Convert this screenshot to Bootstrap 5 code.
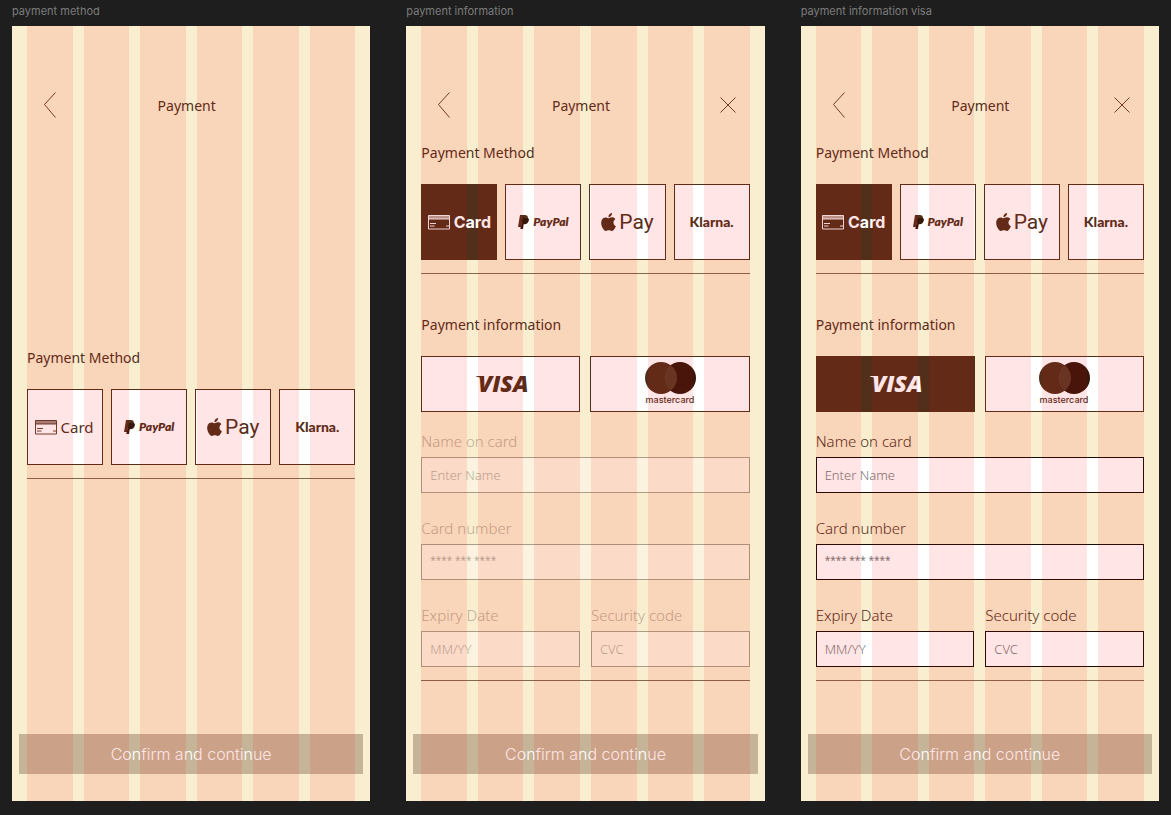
<!DOCTYPE html>
<html lang="en">
<head>
<meta charset="utf-8">
<meta name="viewport" content="width=device-width, initial-scale=1">
<title>Payment screens</title>
<link rel="stylesheet" href="https://cdn.jsdelivr.net/npm/bootstrap@5.3.0/dist/css/bootstrap.min.css">
<style>
:root { --brown: #522f1b; --cream: #f9eecf; }
body { background: #1e1e1e; font-family: "Noto Sans", sans-serif; color: var(--brown); }
.canvas { padding: 0 12px 14px; gap: 36px; min-height: 100vh; }
.frame { flex: 1 1 0; min-width: 320px; }
.frame-name { font: 400 11px/16px Inter, sans-serif; color: #7c7c7c; margin: 3px 0 7px; }
.artboard { background: var(--cream); padding: 64px 15px 27px; }
/* Six-column layout guide laid over the artboard */
.guide { position: absolute; inset: 0 15px; display: grid; grid-template-columns: repeat(6, 1fr); column-gap: 11px; pointer-events: none; }
.guide i { background: rgba(255, 0, 0, .1); }
.topbar { height: 30px; padding: 0 14px 0 15px; }
.topbar h1 { font-size: 14px; line-height: 24px; margin: 0; font-weight: 400; padding-top: 2px; }
.topbar .title-shifted { margin-right: 10px; }
.icon-btn { width: 16px; height: 30px; padding: 0; border: 0; background: none; color: var(--brown); display: flex; align-items: center; justify-content: center; }
.section-title { font-size: 14px; line-height: 24px; font-weight: 400; margin: 0 0 19px; }
.method-step { margin-top: 21px; }
.method-step.centered { margin-top: 226px; }
.methods { display: grid; grid-template-columns: repeat(4, 1fr); gap: 8px; }
.brands { display: grid; grid-template-columns: 1fr 1fr; gap: 10px; }
.tile { height: 76px; padding: 0; border: 1px solid var(--brown); background: #fff; color: var(--brown); display: flex; align-items: center; justify-content: center; white-space: nowrap; }
.brands .tile { height: 56px; }
.tile.chosen { background: var(--brown); color: #fff; }
.rule { margin: 13px 0 0; border: 0; border-top: 1px solid var(--brown); opacity: .7; }
.t-card { font: 400 15px/20px "Noto Sans", sans-serif; gap: 4px; padding-right: 2px; }
.chosen.t-card { font: 700 16px/20px Inter, sans-serif; gap: 4px; padding-right: 0; }
.t-paypal { font: italic 800 12px/20px Lato, sans-serif; gap: 4px; }
.t-apple { font: 400 21px/20px Roboto, sans-serif; gap: 3px; }
.t-klarna { font: 900 14px/20px Lato, sans-serif; }
.visa-word { font: italic 800 23px "Open Sans", sans-serif; }
.mc-word { font: 500 9px Inter, sans-serif; }
.info-step { margin-top: 39px; }
.field-label { display: block; font-size: 15px; line-height: 20px; font-weight: 300; margin-bottom: 6px; }
.field-box { display: block; width: 100%; height: 36px; padding: 0 8px; border: 1px solid #1a0c06; border-radius: 0; background: #fff; font-size: 13px; font-weight: 300; color: #000; }
.field-box::placeholder { color: #777; opacity: 1; }
.field-box.digits { font-size: 10px; font-weight: 400; padding-bottom: 4px; }
.fields { margin-top: 19px; display: grid; grid-template-columns: 1fr 1fr; gap: 25px 11px; }
.fields .wide { grid-column: 1 / -1; }
.fields:disabled { opacity: .35; }
.fields:disabled .field-box::placeholder { color: #333; }
.confirm { height: 40px; margin: auto -8px 0; border: 0; background: rgba(80, 45, 26, .3); color: #fff; font: 300 16px/24px Inter, sans-serif; }
</style>
</head>
<body>
<svg width="0" height="0" class="position-absolute" aria-hidden="true">
  <symbol id="back" viewBox="0 0 12 26"><path d="M11.500.5.500 12.500 11.500 25.500" fill="none" stroke="currentColor" stroke-width=".9"/></symbol>
  <symbol id="close" viewBox="0 0 16 16"><path d="M.5.5l15 15M15.500.5l-15 15" fill="none" stroke="currentColor" stroke-width=".9"/></symbol>
  <symbol id="card-icon" viewBox="0 0 22 15"><path d="M.5.5h21v13.500H.5zM.5 4h21M2 8.500h6M2 11h4.500M18 11h3" fill="none" stroke="currentColor" stroke-width=".9"/><path d="M.5.5h21V4H.5z" fill="currentColor" opacity=".55"/></symbol>
  <symbol id="paypal-icon" viewBox="0 0 11 14"><path d="M2 0h4.800c2.400 0 3.500 1.300 3 3.500-.5 2.500-2.100 4.300-4.600 4.300H3.700L2.900 12H0z" fill="#522f1b"/><path d="M5 3h4.900c1 .6 1.200 1.300.9 2.500-.5 2.400-2 3.800-4.300 3.800h-.8L5 14H2.300l1.200-6z" fill="#35170c"/></symbol>
  <symbol id="apple-icon" viewBox="2 0 20 24"><path fill="currentColor" d="M12.152 6.896c-.948 0-2.415-1.078-3.96-1.04-2.04.027-3.910 1.183-4.961 3.014-2.117 3.675-.546 9.103 1.519 12.090 1.013 1.454 2.208 3.090 3.792 3.039 1.520-.065 2.090-.987 3.935-.987 1.831 0 2.350.987 3.960.948 1.637-.026 2.676-1.480 3.676-2.948 1.156-1.688 1.636-3.325 1.662-3.415-.039-.013-3.182-1.221-3.220-4.857-.026-3.040 2.480-4.494 2.597-4.559-1.429-2.090-3.623-2.324-4.390-2.376-2-.156-3.675 1.090-4.610 1.090zM15.530 3.830c.843-1.012 1.400-2.427 1.245-3.830-1.207.052-2.662.805-3.532 1.818-.780.896-1.454 2.338-1.273 3.714 1.338.104 2.715-.688 3.559-1.701"/></symbol>
  <symbol id="mc-circles" viewBox="0 0 54 34"><circle cx="18" cy="17" r="16" fill="#522f1b"/><circle cx="37" cy="17" r="16" fill="#35170c"/><path d="M27.500 4.100a16 16 0 0 1 0 25.800 16 16 0 0 1 0-25.800z" fill="#5a3a26"/></symbol>
</svg>

<main class="canvas d-flex">
  <section class="frame d-flex flex-column">
    <h2 class="frame-name">payment method</h2>
    <div class="artboard position-relative d-flex flex-column flex-grow-1">
      <header class="topbar d-flex align-items-center justify-content-between">
        <button class="icon-btn" type="button" aria-label="Back"><svg width="12" height="26"><use href="#back"/></svg></button>
        <h1 class="title-shifted">Payment</h1>
        <span class="icon-btn"></span>
      </header>
      <div class="method-step centered">
        <h3 class="section-title">Payment Method</h3>
        <div class="methods">
          <button type="button" class="tile t-card"><svg width="22" height="15"><use href="#card-icon"/></svg>Card</button>
          <button type="button" class="tile t-paypal"><svg width="11" height="14"><use href="#paypal-icon"/></svg>PayPal</button>
          <button type="button" class="tile t-apple"><svg width="15" height="18"><use href="#apple-icon"/></svg>Pay</button>
          <button type="button" class="tile t-klarna">Klarna.</button>
        </div>
        <hr class="rule">
      </div>
      <button type="button" class="confirm">Confirm and continue</button>
      <div class="guide"><i></i><i></i><i></i><i></i><i></i><i></i></div>
    </div>
  </section>

  <section class="frame d-flex flex-column">
    <h2 class="frame-name">payment information</h2>
    <div class="artboard position-relative d-flex flex-column flex-grow-1">
      <header class="topbar d-flex align-items-center justify-content-between">
        <button class="icon-btn" type="button" aria-label="Back"><svg width="12" height="26"><use href="#back"/></svg></button>
        <h1 class="title-shifted">Payment</h1>
        <button class="icon-btn" type="button" aria-label="Close"><svg width="16" height="16"><use href="#close"/></svg></button>
      </header>
      <div class="method-step">
        <h3 class="section-title">Payment Method</h3>
        <div class="methods">
          <button type="button" class="tile t-card chosen"><svg width="22" height="15"><use href="#card-icon"/></svg>Card</button>
          <button type="button" class="tile t-paypal"><svg width="11" height="14"><use href="#paypal-icon"/></svg>PayPal</button>
          <button type="button" class="tile t-apple"><svg width="15" height="18"><use href="#apple-icon"/></svg>Pay</button>
          <button type="button" class="tile t-klarna">Klarna.</button>
        </div>
        <hr class="rule">
      </div>
      <form class="info-step">
        <h3 class="section-title">Payment information</h3>
        <div class="brands">
          <button type="button" class="tile"><svg width="56" height="40"><path d="M3 12h8v4Q7 13 3 12.600z" fill="currentColor"/><text class="visa-word" x="5" y="28" fill="currentColor">VISA</text></svg></button>
          <button type="button" class="tile"><svg width="54" height="46"><use href="#mc-circles" width="54" height="34"/><text class="mc-word" x="27" y="42" text-anchor="middle" fill="currentColor">mastercard</text></svg></button>
        </div>
        <fieldset class="fields" disabled>
          <div class="wide"><label class="field-label" for="name-a">Name on card</label><input class="field-box" id="name-a" type="text" placeholder="Enter Name"></div>
          <div class="wide"><label class="field-label" for="number-a">Card number</label><input class="field-box digits" id="number-a" type="text" placeholder="**** *** ****"></div>
          <div><label class="field-label" for="expiry-a">Expiry Date</label><input class="field-box" id="expiry-a" type="text" placeholder="MM/YY"></div>
          <div><label class="field-label" for="code-a">Security code</label><input class="field-box" id="code-a" type="text" placeholder="CVC"></div>
        </fieldset>
        <hr class="rule">
      </form>
      <button type="button" class="confirm">Confirm and continue</button>
      <div class="guide"><i></i><i></i><i></i><i></i><i></i><i></i></div>
    </div>
  </section>

  <section class="frame d-flex flex-column">
    <h2 class="frame-name">payment information visa</h2>
    <div class="artboard position-relative d-flex flex-column flex-grow-1">
      <header class="topbar d-flex align-items-center justify-content-between">
        <button class="icon-btn" type="button" aria-label="Back"><svg width="12" height="26"><use href="#back"/></svg></button>
        <h1>Payment</h1>
        <button class="icon-btn" type="button" aria-label="Close"><svg width="16" height="16"><use href="#close"/></svg></button>
      </header>
      <div class="method-step">
        <h3 class="section-title">Payment Method</h3>
        <div class="methods">
          <button type="button" class="tile t-card chosen"><svg width="22" height="15"><use href="#card-icon"/></svg>Card</button>
          <button type="button" class="tile t-paypal"><svg width="11" height="14"><use href="#paypal-icon"/></svg>PayPal</button>
          <button type="button" class="tile t-apple"><svg width="15" height="18"><use href="#apple-icon"/></svg>Pay</button>
          <button type="button" class="tile t-klarna">Klarna.</button>
        </div>
        <hr class="rule">
      </div>
      <form class="info-step">
        <h3 class="section-title">Payment information</h3>
        <div class="brands">
          <button type="button" class="tile chosen"><svg width="56" height="40"><path d="M3 12h8v4Q7 13 3 12.600z" fill="currentColor"/><text class="visa-word" x="5" y="28" fill="currentColor">VISA</text></svg></button>
          <button type="button" class="tile"><svg width="54" height="46"><use href="#mc-circles" width="54" height="34"/><text class="mc-word" x="27" y="42" text-anchor="middle" fill="currentColor">mastercard</text></svg></button>
        </div>
        <fieldset class="fields">
          <div class="wide"><label class="field-label" for="name-b">Name on card</label><input class="field-box" id="name-b" type="text" placeholder="Enter Name"></div>
          <div class="wide"><label class="field-label" for="number-b">Card number</label><input class="field-box digits" id="number-b" type="text" placeholder="**** *** ****"></div>
          <div><label class="field-label" for="expiry-b">Expiry Date</label><input class="field-box" id="expiry-b" type="text" placeholder="MM/YY"></div>
          <div><label class="field-label" for="code-b">Security code</label><input class="field-box" id="code-b" type="text" placeholder="CVC"></div>
        </fieldset>
        <hr class="rule">
      </form>
      <button type="button" class="confirm">Confirm and continue</button>
      <div class="guide"><i></i><i></i><i></i><i></i><i></i><i></i></div>
    </div>
  </section>
</main>
<script src="https://cdn.jsdelivr.net/npm/bootstrap@5.3.0/dist/js/bootstrap.bundle.min.js"></script>
</body>
</html>
